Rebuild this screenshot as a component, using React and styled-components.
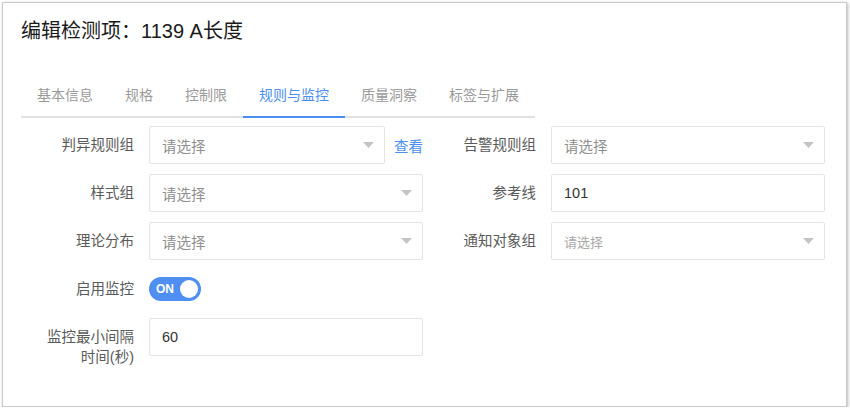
import React, { useState } from 'react';
import styled, { createGlobalStyle } from 'styled-components';

const GlobalStyle = createGlobalStyle`
  html, body {
    margin: 0;
    padding: 0;
    background: #ffffff;
  }
  body {
    font-family: 'Liberation Sans', 'Noto Sans CJK SC', sans-serif;
    font-size: 14px;
    color: #333;
  }
`;

const TABS = ['基本信息', '规格', '控制限', '规则与监控', '质量洞察', '标签与扩展'];

const Caret = () => (
  <svg width='11' height='6' viewBox='0 0 11 6'>
    <path d='M0 0 L11 0 L5.5 6 Z' fill='#c4c4c4' />
  </svg>
);

// 下拉框
const Select = ({ placeholder = '请选择', small }) => (
  <SelectBox>
    <Placeholder $small={small}>{placeholder}</Placeholder>
    <Caret />
  </SelectBox>
);

const App = () => {
  const [active, setActive] = useState(3);
  const [monitor, setMonitor] = useState(true);

  return (
    <>
      <GlobalStyle />
      <Card>
        <Title>编辑检测项：1139 A长度</Title>
        <TabBar>
          {TABS.map((t, i) => (
            <Tab key={t} $active={i === active} onClick={() => setActive(i)}>
              {t}
            </Tab>
          ))}
        </TabBar>
        <Form>
          <Field>
            <Label>判异规则组</Label>
            <Control>
              <Select />
              <Link>查看</Link>
            </Control>
          </Field>
          <Field>
            <Label>告警规则组</Label>
            <Control>
              <Select />
            </Control>
          </Field>

          <Field>
            <Label>样式组</Label>
            <Control>
              <Select />
            </Control>
          </Field>
          <Field>
            <Label>参考线</Label>
            <Control>
              <Input defaultValue='101' />
            </Control>
          </Field>

          <Field>
            <Label>理论分布</Label>
            <Control>
              <Select />
            </Control>
          </Field>
          <Field>
            <Label>通知对象组</Label>
            <Control>
              <Select small />
            </Control>
          </Field>

          <Field>
            <Label>启用监控</Label>
            <Control>
              <Switch $on={monitor} onClick={() => setMonitor(!monitor)}>
                <span>{monitor ? 'ON' : 'OFF'}</span>
                <Knob $on={monitor} />
              </Switch>
            </Control>
          </Field>
          <div />

          <Field>
            <Label>
              监控最小间隔
              <br />
              时间(秒)
            </Label>
            <Control>
              <Input defaultValue='60' />
            </Control>
          </Field>
        </Form>
      </Card>
    </>
  );
};
export default App;

const Card = styled.div`
  box-sizing: border-box;
  margin: 2px 3px 0 2px;
  height: 405px;
  border: 1px solid #c9c9c9;
  box-shadow: 1px 1px 3px rgba(0, 0, 0, 0.28);
  background: #fff;
  padding: 0 21px 0 18px;
`;
const Title = styled.h2`
  margin: 0;
  padding-top: 14px;
  height: 57px;
  box-sizing: border-box;
  font-size: 20px;
  font-weight: 400;
  line-height: 28px;
  color: #1a1a1a;
`;
const TabBar = styled.div`
  display: inline-flex;
  border-bottom: 2px solid #e1e1e1;
`;
const Tab = styled.div`
  padding: 0 16px;
  height: 56px;
  line-height: 70px;
  box-sizing: border-box;
  font-size: 14px;
  color: ${(p) => (p.$active ? '#4a8ff0' : '#9a9a9a')};
  cursor: pointer;
  position: relative;
  &::after {
    content: '';
    position: absolute;
    left: 0;
    right: 0;
    bottom: -2px;
    height: 2px;
    background: ${(p) => (p.$active ? '#4a8ff0' : 'transparent')};
  }
`;
const Form = styled.div`
  display: grid;
  grid-template-columns: 1fr 1fr;
  grid-auto-rows: 38px;
  row-gap: 10px;
  margin-top: 8px;
`;
const Field = styled.div`
  display: flex;
  height: 38px;
`;
const Label = styled.div`
  width: 113px;
  flex-shrink: 0;
  margin-right: 15px;
  padding-top: 9px;
  text-align: right;
  font-size: 14.5px;
  line-height: 20px;
  color: #5a5a5a;
  white-space: nowrap;
`;
const Control = styled.div`
  flex: 1;
  display: flex;
  align-items: center;
  gap: 9px;
`;
const SelectBox = styled.div`
  flex: 1;
  height: 38px;
  box-sizing: border-box;
  border: 1px solid #e3e3e3;
  border-radius: 2px;
  display: flex;
  align-items: center;
  justify-content: space-between;
  padding: 0 10px 0 12px;
  background: #fff;
`;
const Placeholder = styled.span`
  font-size: ${(p) => (p.$small ? '13px' : '14.5px')};
  color: ${(p) => (p.$small ? '#a8a8a8' : '#8f8f8f')};
`;
const Input = styled.input`
  flex: 1;
  width: 100%;
  height: 38px;
  box-sizing: border-box;
  border: 1px solid #e3e3e3;
  border-radius: 2px;
  padding: 0 12px;
  font-family: inherit;
  font-size: 14.5px;
  color: #333;
  outline: none;
`;
const Link = styled.a`
  font-size: 14.5px;
  color: #4a8ff0;
  cursor: pointer;
  white-space: nowrap;
`;
const Switch = styled.div`
  width: 52px;
  height: 24px;
  border-radius: 12px;
  background: ${(p) => (p.$on ? '#4f8ff2' : '#ccc')};
  display: flex;
  align-items: center;
  justify-content: space-between;
  padding: 0 3px 0 7px;
  box-sizing: border-box;
  cursor: pointer;
  span {
    color: #fff;
    font-size: 12px;
    font-weight: 700;
  }
`;
const Knob = styled.div`
  width: 18px;
  height: 18px;
  border-radius: 50%;
  background: #fff;
`;
